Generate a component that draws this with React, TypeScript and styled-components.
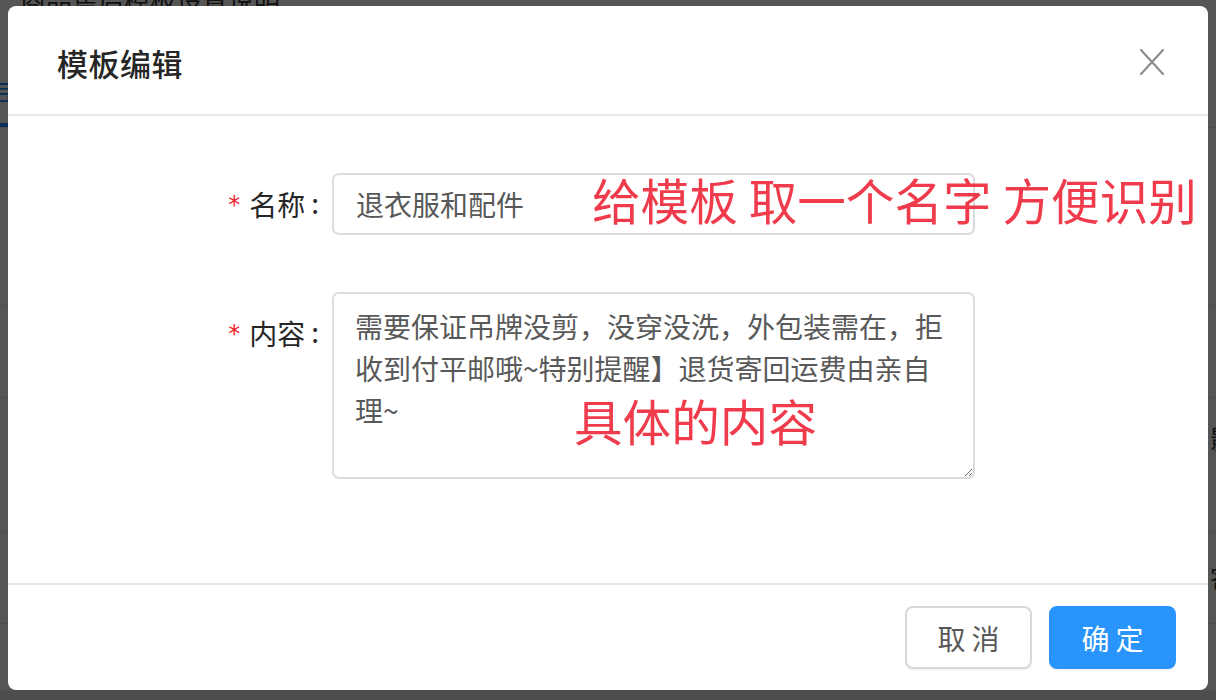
import React from 'react';
import styled, { createGlobalStyle } from 'styled-components';

const GlobalStyle = createGlobalStyle`
  html, body {
    margin: 0;
    padding: 0;
  }
  body {
    font-family: "Noto Sans CJK SC", "Noto Sans", sans-serif;
    color: #262626;
  }
  * {
    box-sizing: border-box;
  }
`;

// page behind the mask
const Page = styled.div`
  position: relative;
  width: 1216px;
  height: 700px;
  overflow: hidden;
  background: #e9e9ee;
`;

const Backdrop = styled.div`
  width: 100%;
  height: 690px;
  background: #ffffff;
  display: flex;
  flex-direction: column;
`;

const TopText = styled.div`
  height: 8px;
  overflow: hidden;
  padding-left: 20px;
  font-size: 26px;
  line-height: 0px;
  color: #333;
`;

const Tabs = styled.div`
  height: 120px;
  display: flex;
  align-items: flex-end;
  border-bottom: 1px solid #e8e8e8;
`;

const Tab = styled.div<{ $active?: boolean }>`
  font-size: 28px;
  line-height: 60px;
  margin-left: -18px;
  padding: 0 10px;
  color: ${({ $active }) => ($active ? '#1890ff' : '#333')};
  border-bottom: 4px solid ${({ $active }) => ($active ? '#1890ff' : 'transparent')};
`;

const TableRow = styled.div<{ $h: number; $pad?: number }>`
  height: ${({ $h }) => $h}px;
  padding-top: ${({ $pad }) => $pad ?? 0}px;
  border-bottom: 1px solid #e8e8e8;
  display: flex;
  justify-content: flex-end;
  align-items: ${({ $pad }) => ($pad ? 'flex-start' : 'center')};
  font-size: 26px;
  line-height: 36px;
  color: #333;
`;

const EdgeCell = styled.span`
  margin-right: -20px;
`;

const Mask = styled.div`
  position: absolute;
  inset: 0;
  background: rgba(0, 0, 0, 0.665);
  padding: 6px 8px;
`;

const Dialog = styled.div`
  width: 1200px;
  height: 684px;
  background: #fff;
  border-radius: 8px;
  display: flex;
  flex-direction: column;
  overflow: hidden;
`;

const Header = styled.div`
  height: 110px;
  padding: 4px 44px 0 49px;
  display: flex;
  align-items: center;
  justify-content: space-between;
  border-bottom: 2px solid #e8e8e8;
`;

const Title = styled.div`
  font-size: 31px;
  font-weight: 500;
  color: #262626;
  letter-spacing: 0.5px;
`;

const CloseButton = styled.button`
  width: 24px;
  height: 26px;
  padding: 0;
  border: none;
  background: transparent;
  display: flex;
  align-items: center;
  justify-content: center;
  cursor: pointer;
`;

const Body = styled.div`
  flex: 1;
  padding-top: 57px;
  display: flex;
  flex-direction: column;
  border-bottom: 2px solid #e8e8e8;
`;

const FormRow = styled.div<{ $gap?: number }>`
  position: relative;
  display: flex;
  align-items: flex-start;
  margin-bottom: ${({ $gap }) => $gap ?? 0}px;
`;

const Label = styled.label<{ $offset?: number }>`
  width: 324px;
  padding-right: 13px;
  margin-top: ${({ $offset }) => $offset ?? 0}px;
  display: flex;
  align-items: center;
  justify-content: flex-end;
  height: 62px;
  font-size: 28px;
  color: #262626;
`;

const Required = styled.span`
  color: #f5222d;
  font-family: "DejaVu Sans", sans-serif;
  font-size: 24px;
  margin-right: 9px;
  position: relative;
  top: 1px;
`;

const Colon = styled.span`
  margin: 0 0 0 6px;
  position: relative;
  top: -2px;
`;

const Input = styled.input`
  width: 643px;
  height: 62px;
  padding: 0 22px;
  border: 2px solid #dcdcdc;
  border-radius: 7px;
  font-family: "Noto Sans CJK SC", sans-serif;
  font-size: 28px;
  color: #595959;
  outline: none;
  background: #fff;
`;

const TextArea = styled.textarea`
  width: 643px;
  height: 187px;
  padding: 11px 20px 11px 21px;
  border: 2px solid #dcdcdc;
  border-radius: 7px;
  font-family: "Noto Sans CJK SC", sans-serif;
  font-size: 28px;
  line-height: 42px;
  color: #595959;
  outline: none;
  resize: vertical;
  background: #fff;
`;

const Note = styled.div<{ $left: number; $top: number }>`
  position: absolute;
  left: ${({ $left }) => $left}px;
  top: ${({ $top }) => $top}px;
  font-size: 48.6px;
  line-height: 48px;
  color: #ef3b4b;
  white-space: pre;
  pointer-events: none;
`;

const Footer = styled.div`
  height: 105px;
  padding: 0 32px;
  display: flex;
  align-items: center;
  justify-content: flex-end;
  gap: 17px;
`;

const Button = styled.button<{ $primary?: boolean }>`
  width: 127px;
  height: 63px;
  border-radius: 8px;
  font-family: "Noto Sans CJK SC", sans-serif;
  font-size: 28px;
  letter-spacing: 6px;
  padding: 0 0 0 6px;
  cursor: pointer;
  border: 2px solid ${({ $primary }) => ($primary ? '#2894fc' : '#d9d9d9')};
  background: ${({ $primary }) => ($primary ? '#2894fc' : '#fff')};
  color: ${({ $primary }) => ($primary ? '#fff' : '#595959')};
  box-shadow: 0 2px 0 rgba(0, 0, 0, 0.03);
`;

export default function App() {
  return (
    <Page>
      <GlobalStyle />
      <Backdrop>
        <TopText>商品售后模板设置说明</TopText>
        <Tabs>
          <Tab $active>司</Tab>
        </Tabs>
        <TableRow $h={178} />
        <TableRow $h={92} />
        <TableRow $h={134} $pad={22}>
          <EdgeCell>影</EdgeCell>
        </TableRow>
        <TableRow $h={92}>
          <EdgeCell>寄</EdgeCell>
        </TableRow>
      </Backdrop>
      <Mask>
        <Dialog>
          <Header>
            <Title>模板编辑</Title>
            <CloseButton aria-label="close">
              <svg width="24" height="26" viewBox="0 0 24 26" fill="none">
                <path d="M1 1L23 25M23 1L1 25" stroke="#8c8c8c" strokeWidth="2.2" strokeLinecap="round" />
              </svg>
            </CloseButton>
          </Header>
          <Body>
            <FormRow $gap={57}>
              <Label>
                <Required>*</Required>名称<Colon>:</Colon>
              </Label>
              <Input readOnly value="退衣服和配件" />
              <Note $left={584} $top={2}>给模板 取一个名字 方便识别</Note>
            </FormRow>
            <FormRow>
              <Label $offset={10}>
                <Required>*</Required>内容<Colon>:</Colon>
              </Label>
              <TextArea
                readOnly
                value="需要保证吊牌没剪，没穿没洗，外包装需在，拒收到付平邮哦~特别提醒】退货寄回运费由亲自理~"
              />
              <Note $left={566} $top={104}>具体的内容</Note>
            </FormRow>
          </Body>
          <Footer>
            <Button>取消</Button>
            <Button $primary>确定</Button>
          </Footer>
        </Dialog>
      </Mask>
    </Page>
  );
}
